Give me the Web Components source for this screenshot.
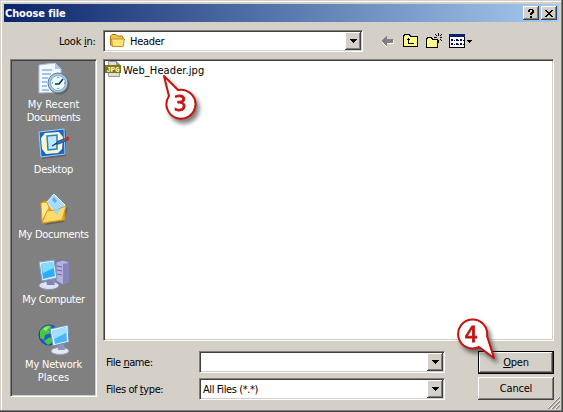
<!DOCTYPE html>
<html lang="en">
<head>
<meta charset="utf-8">
<title>Choose file</title>
<style>
  body {
    margin: 0;
    overflow: hidden;
    background: #d4d0c8;
    font: 11px/13px "DejaVu Sans Condensed", "Liberation Sans", sans-serif;
    color: #000;
  }
</style>
</head>
<body>
<file-dialog></file-dialog>

<script>
const ICONS = {
  recent: `<svg width="32" height="32" viewBox="0 0 32 32">
    <path d="M1 2 17 0 23 6V29L1 30Z" fill="#f3f8ff" stroke="#a8c3ee"/>
    <path d="M17 0v6h6Z" fill="#a9caf5"/>
    <path d="M4 7h10M4 11h9M4 15h6M4 19h5M4 23h5M4 27h7" stroke="#8cb1ed" stroke-width="1.500"/>
    <ellipse cx="21.500" cy="21.500" rx="10" ry="10" fill="#333" opacity=".4"/>
    <circle cx="20" cy="20" r="10" fill="#a9c5d9" stroke="#5f7c92"/>
    <circle cx="20" cy="20" r="7.500" fill="#e8faff" stroke="#7baac3"/>
    <path d="M17 21h4l4-5" fill="none" stroke="#142e49" stroke-width="1.600"/>
    <path d="M20 14v1M20 25v1M14 20h1M26 20h1" stroke="#346"/></svg>`,
  desktop: `<svg width="32" height="32" viewBox="0 0 32 32">
    <path d="M3 4 28 2 28 28 4 31Z" fill="#333" opacity=".4"/>
    <path d="M1 4 26 1 27 26 3 29Z" fill="#1965c8" stroke="#9cd0ff"/>
    <path d="M7 5 21 4 25 9 24 21 20 25 8 26 4 21 3 10Z" fill="#fff6c9"/>
    <path d="M9 8 19 7 19 21 10 22Z" fill="#c2e7ff" stroke="#2684d1" stroke-width="1.500"/>
    <path d="M17 16 20 13 29 10 30 12 21 16Z" fill="#346fae" stroke="#17467e" stroke-width=".7"/>
    <path d="m14 18 5-3" stroke="#235" stroke-width="1.200"/><circle cx="29.500" cy="10.500" r="2" fill="#d32d21"/></svg>`,
  documents: `<svg width="32" height="32" viewBox="0 0 32 32">
    <path d="m7 32 19-3 4-15Z" fill="#333" opacity=".4"/>
    <path d="M3 10 5 8h5l3 3 14 4v12L5 30Z" fill="#e9aa27" stroke="#bd8118"/>
    <path d="M9 9 16 1 27 12 19 23Z" fill="#a9daff" stroke="#e5f6ff"/>
    <path d="m14 7 2-3 3 4-2 2Z" fill="#5faaf0"/>
    <path d="M3 10 9 9 11 15 4 28Z" fill="#ffe98b" stroke="#d8a133"/>
    <path d="M4 30 9 18 18 17 28 13 24 27Z" fill="#ffdc66" stroke="#d99b25"/>
    <path d="m15 18 9-3-5 7Z" fill="#a4d7f5"/></svg>`,
  computer: `<svg width="32" height="32" viewBox="0 0 32 32">
    <path d="m18 4 7-2 6 2v20l-6 3-7-4Z" fill="#b3b2dc" stroke="#7777a8"/>
    <path d="M25 6v21l6-4V5Z" fill="#8585bb"/><path d="m19 8 5 1m-5 3 5 1m-5 3 5 1" stroke="#6568a4"/>
    <path d="m9 20 8 1 1 6H8Z" fill="#8691bf"/><ellipse cx="11" cy="27.500" rx="10" ry="4" fill="#dce2f4" stroke="#8e95bc"/>
    <path d="M8 22h7l2 5H9Z" fill="#7d88b5"/>
    <path d="M1 4 16 2 19 20 4 23Z" fill="#e0edff" stroke="#7e96c4"/>
    <path d="M3 6 15 4 17 18 5 21Z" fill="#2aafff"/><path d="m3 6 12-2 1 6L5 15Z" fill="#82dcff"/></svg>`,
  network: `<svg width="32" height="32" viewBox="0 0 32 32">
    <circle cx="11" cy="12" r="10" fill="#1b5cd1" stroke="#164498"/>
    <path d="M2 8Q7 1 14 3l-3 4 2 3-6 2-1 5-4-2Zm4 10 6-4 3 5-5 3Z" fill="#49c743"/>
    <path d="M5 6q3-3 7-3l-4 5Z" fill="#9be974"/>
    <path d="m20 20 6 1 1 6h-8Z" fill="#8996bd"/><ellipse cx="22" cy="28" rx="9" ry="3.500" fill="#e5e7f4" stroke="#9b9fbf"/>
    <path d="M20 22h6l1 5h-7Z" fill="#8996bd"/>
    <path d="M12 6 30 2 31 19 15 23Z" fill="#e1efff" stroke="#718ebd"/>
    <path d="m14 8 14-4 1 14-12 3Z" fill="#4bb5f7"/><path d="m14 8 14-4v6l-12 6Z" fill="#9ee2ff"/></svg>`,
  folder: `<svg width="16" height="14" viewBox="0 0 16 14">
    <path d="M1.500 11V2L3 .5h4L8.500 2H13l1 1v9H3Z" fill="#f3c545" stroke="#a87512"/>
    <path d="M3.500 12.500 2.500 5H15.500L14 12.500Z" fill="#ffe37c" stroke="#c4931f"/></svg>`,
  jpg: `<svg width="16" height="17" viewBox="0 0 16 17">
    <path d="M3.500 .5h8l3 3v12h-11Z" fill="#ddd" stroke="#999"/><path d="M11.500 .5v3h3" fill="#aaa" stroke="#888"/>
    <path d="M0 4h16v8H0Z" fill="#7b7b00"/>
    <text x="1.500" y="11" textLength="13" lengthAdjust="spacingAndGlyphs" font-family="Liberation Mono" font-weight="bold" font-size="8" fill="#fff">JPG</text></svg>`,
  back: `<svg width="16" height="16" viewBox="0 0 16 16" shape-rendering="crispEdges">
    <path d="M2 9 7 4v3h7v4H7v4Z" fill="#fff"/><path d="M1 8h1V7h1V6h1V5h1V4h1V3h1v3h6v4H7v3H6v-1H5v-1H4v-1H3V9H2V8Z" fill="#808080"/></svg>`,
  up: `<svg width="16" height="16" viewBox="0 0 16 16" shape-rendering="crispEdges">
    <path d="M.5 13.500v-10l1-2h5l1 2h7v10Z" fill="#ffff87" stroke="#000"/>
    <path d="M5.500 6v4.500H11M3.500 7.500 5.500 5.500 7.500 7.500" fill="none" stroke="#000"/></svg>`,
  create: `<svg width="16" height="16" viewBox="0 0 16 16" shape-rendering="crispEdges">
    <path d="M.5 14.500V6.500l1-2h4l1 2h5v8Z" fill="#ffff87" stroke="#000"/>
    <path d="M12 0h1v3h-1ZM12 7h1v3h-1ZM8 4h3v1H8ZM14 4h2v1h-2ZM9 1h1v1H9ZM10 2h1v1h-1ZM14 2h1v1h-1ZM15 1h1v1h-1ZM14 6h1v1h-1ZM15 7h1v1h-1ZM10 6h1v1h-1Z" fill="#000"/></svg>`,
  view: `<svg width="24" height="16" viewBox="0 0 24 16" shape-rendering="crispEdges">
    <path d="M.5 1.500h15v13H.5Z" fill="#fff" stroke="#000"/><path d="M0 1h16v3H0Z" fill="#0a246a"/>
    <path d="M2 6h2v2H2ZM7 6h2v2H7ZM11 6h2v2h-2ZM2 10h2v2H2ZM7 10h2v2H7ZM11 10h2v2h-2Z" fill="#000080"/>
    <path d="M5 7.500h1M9 7.500h1M14 7.500h1M5 11.500h1M9 11.500h1M14 11.500h1" stroke="#000"/>
    <path d="M18 7h5v1h-1v1h-1v1h-1V9h-1V8h-1Z"/></svg>`,
  help: `<svg width="8" height="9" viewBox="0 0 8 9" shape-rendering="crispEdges"><path d="M2 0h4v1h1v3H6v1H5v1H3V4h1V3h1V1H3v2H1V1h1ZM3 7h2v2H3Z"/></svg>`,
  close: `<svg width="8" height="7" viewBox="0 0 8 7" shape-rendering="crispEdges"><path d="M0 0h2v1h1v1h2V1h1V0h2v1H7v1H6v1H5v1h1v1h1v1h1v1H6V6H5V5H3v1H2v1H0V6h1V5h1V4h1V3H2V2H1V1H0Z"/></svg>`
};

class BaseElement extends HTMLElement {
  connectedCallback() {
    if (this.shadowRoot) {
      return;
    }
    this.attachShadow({ mode: 'open' });
    this.shadowRoot.innerHTML = this.template();
  }
}

class XpIcon extends BaseElement {
  template() {
    return `
      <style>
        :host { display: block; flex: none; }
        svg { display: block; }
      </style>
      ${ICONS[this.getAttribute('name')]}`;
  }
}

// letter-spacing comes from the "spacing" attribute, in pixels
class XpText extends BaseElement {
  template() {
    return `
      <style>
        :host {
          display: block;
          flex: none;
          white-space: nowrap;
          letter-spacing: ${this.getAttribute('spacing') || 0}px;
        }
        ::slotted(u) { text-underline-offset: 1px; text-decoration-thickness: 1px; text-decoration-skip-ink: none; }
      </style>
      <slot></slot>`;
  }
}

class XpButton extends BaseElement {
  template() {
    return `
      <style>
        :host {
          display: flex;
          box-sizing: border-box;
          align-items: center;
          justify-content: center;
          background: #d4d0c8;
          box-shadow: inset -1px -1px #404040, inset 1px 1px #fff, inset -2px -2px #808080;
        }
        :host([default]) {
          border: 1px solid #000;
        }
      </style>
      <slot></slot>`;
  }
}

class XpCombo extends BaseElement {
  template() {
    return `
      <style>
        :host {
          display: flex;
          box-sizing: border-box;
          align-items: center;
          border: 1px solid;
          border-color: #808080 #fff #fff #808080;
          box-shadow: inset 1px 1px #404040, inset -1px -1px #d4d0c8;
          background: #fff;
          padding: 1px;
        }
        .value { flex: 1; display: flex; align-items: center; padding-left: 2px; }
        xp-button { width: 16px; align-self: stretch; }
      </style>
      <div class="value"><slot></slot></div>
      <xp-button><svg width="7" height="4" viewBox="0 0 7 4" shape-rendering="crispEdges"><path d="M0 0h7v1H6v1H5v1H4v1H3V3H2V2H1V1H0Z"/></svg></xp-button>`;
  }
}

class PlaceItem extends BaseElement {
  template() {
    return `
      <style>
        :host {
          display: flex;
          flex-direction: column;
          align-items: center;
          gap: 3px;
          height: 65px;
          color: #fff;
        }
        .label { display: flex; flex-direction: column; align-items: center; }
      </style>
      <xp-icon name="${this.getAttribute('icon')}"></xp-icon>
      <div class="label"><slot></slot></div>`;
  }
}

class StepCallout extends BaseElement {
  template() {
    const path = this.getAttribute('tail') === 'up'
      ? 'M6 4 11 24A14.500 14.500 0 1 0 20 18Z'
      : 'M41 42 34 20A14.500 14.500 0 1 0 26 31Z';
    return `
      <style>
        :host { position: absolute; width: 48px; height: 56px; }
        svg { display: block; overflow: visible; filter: drop-shadow(3px 4px 2px rgba(0, 0, 0, .5)); }
        text { font: 21px "DejaVu Sans", sans-serif; fill: #c5130f; stroke: #c5130f; stroke-width: .8px; }
      </style>
      <svg width="48" height="56" viewBox="0 0 48 56">
        <path d="${path}" fill="#fff" stroke="#c5130f" stroke-width="2" stroke-linejoin="round"/>
        <text x="${this.getAttribute('tx')}" y="${this.getAttribute('ty')}">${this.getAttribute('step')}</text>
      </svg>`;
  }
}

class FileDialog extends BaseElement {
  template() {
    return `
      <style>
        :host {
          position: relative;
          display: flex;
          flex-direction: column;
          box-sizing: border-box;
          width: 563px;
          height: 412px;
          padding: 4px;
          background: #d4d0c8;
          box-shadow: inset -1px -1px #404040, inset -2px -2px #808080, inset 1px 1px #d4d0c8, inset 2px 2px #fff;
        }
        .title {
          display: flex;
          align-items: center;
          height: 18px;
          box-sizing: border-box;
          padding: 0 2px 0 1px;
          background: linear-gradient(90deg, #0a246a, #a6caf0);
          color: #fff;
          font-weight: bold;
        }
        .title xp-text { flex: 1; }
        .title xp-button { width: 16px; height: 14px; }
        .title xp-button + xp-button { margin-left: 2px; }
        .toolbar { display: flex; align-items: center; margin-top: 8px; height: 22px; padding-left: 55px; }
        .toolbar .lookin { width: 44px; }
        .toolbar xp-combo { width: 260px; height: 22px; }
        .tools { display: flex; gap: 7px; margin-left: 17px; }
        .folder { margin-right: 5px; margin-left: 2px; }
        .body { display: flex; gap: 6px; padding: 7px 5px 0 6px; }
        .places {
          box-sizing: border-box;
          width: 87px;
          height: 338px;
          padding-top: 3px;
          background: #808080;
          border: 1px solid;
          border-color: #808080 #fff #fff #808080;
          box-shadow: inset 1px 1px #404040, inset -1px -1px #d4d0c8;
        }
        .main { flex: 1; display: flex; flex-direction: column; }
        .list {
          box-sizing: border-box;
          height: 282px;
          padding: 1px;
          background: #fff;
          border: 1px solid;
          border-color: #808080 #fff #fff #808080;
          box-shadow: inset 1px 1px #404040, inset -1px -1px #d4d0c8;
        }
        .file { display: flex; align-items: flex-end; gap: 2px; height: 17px; }
        .file xp-text { line-height: 15px; }
        .form { display: flex; margin-top: 10px; padding-left: 3px; }
        .fields { width: 339px; display: flex; flex-direction: column; gap: 5px; }
        .field { display: flex; align-items: center; height: 22px; }
        .field xp-text.label { width: 93px; }
        .field xp-combo { flex: 1; height: 22px; }
        .actions { margin-left: 33px; width: 76px; display: flex; flex-direction: column; gap: 3px; }
        .actions xp-button { height: 23px; }
        .grip { position: absolute; right: 3px; bottom: 3px; }
        .three { left: 158px; top: 72px; }
        .four { left: 453px; top: 316px; }
      </style>
      <div class="title">
        <xp-text spacing="-0.1">Choose file</xp-text>
        <xp-button><xp-icon name="help"></xp-icon></xp-button>
        <xp-button><xp-icon name="close"></xp-icon></xp-button>
      </div>
      <div class="toolbar">
        <xp-text class="lookin" spacing="-0.25">Look <u>i</u>n:</xp-text>
        <xp-combo><xp-icon class="folder" name="folder"></xp-icon><xp-text spacing="-0.3">Header</xp-text></xp-combo>
        <div class="tools">
          <xp-icon name="back"></xp-icon>
          <xp-icon name="up"></xp-icon>
          <xp-icon name="create"></xp-icon>
          <xp-icon name="view"></xp-icon>
        </div>
      </div>
      <div class="body">
        <div class="places">
          <place-item icon="recent"><xp-text>My Recent</xp-text><xp-text spacing="-0.3">Documents</xp-text></place-item>
          <place-item icon="desktop"><xp-text spacing="-0.2">Desktop</xp-text></place-item>
          <place-item icon="documents"><xp-text spacing="-0.3">My Documents</xp-text></place-item>
          <place-item icon="computer"><xp-text spacing="-0.4">My Computer</xp-text></place-item>
          <place-item icon="network"><xp-text spacing="-0.2">My Network</xp-text><xp-text>Places</xp-text></place-item>
        </div>
        <div class="main">
          <div class="list">
            <div class="file"><xp-icon name="jpg"></xp-icon><xp-text spacing="0.1">Web_Header.jpg</xp-text></div>
          </div>
          <div class="form">
            <div class="fields">
              <div class="field"><xp-text class="label" spacing="-0.45">File <u>n</u>ame:</xp-text><xp-combo></xp-combo></div>
              <div class="field"><xp-text class="label" spacing="-0.4">Files of <u>t</u>ype:</xp-text><xp-combo><xp-text spacing="-0.4">All Files (*.*)</xp-text></xp-combo></div>
            </div>
            <div class="actions">
              <xp-button default><xp-text spacing="-0.2"><u>O</u>pen</xp-text></xp-button>
              <xp-button><xp-text spacing="-0.2">Cancel</xp-text></xp-button>
            </div>
          </div>
        </div>
      </div>
      <svg class="grip" width="12" height="12" viewBox="0 0 12 12">
        <path d="M0 12 12 0M4 12l8-8M8 12l4-4" stroke="#808080" stroke-width="1.500"/>
        <path d="M-1 12 12-1M3 12l9-9M7 12l5-5" stroke="#fff" stroke-width=".8"/>
      </svg>
      <step-callout class="three" tail="up" step="3" tx="15.500" ty="39"></step-callout>
      <step-callout class="four" tail="down" step="4" tx="11.500" ty="26"></step-callout>`;
  }
}

customElements.define('xp-icon', XpIcon);
customElements.define('xp-text', XpText);
customElements.define('xp-button', XpButton);
customElements.define('xp-combo', XpCombo);
customElements.define('place-item', PlaceItem);
customElements.define('step-callout', StepCallout);
customElements.define('file-dialog', FileDialog);
</script>
</body>
</html>
